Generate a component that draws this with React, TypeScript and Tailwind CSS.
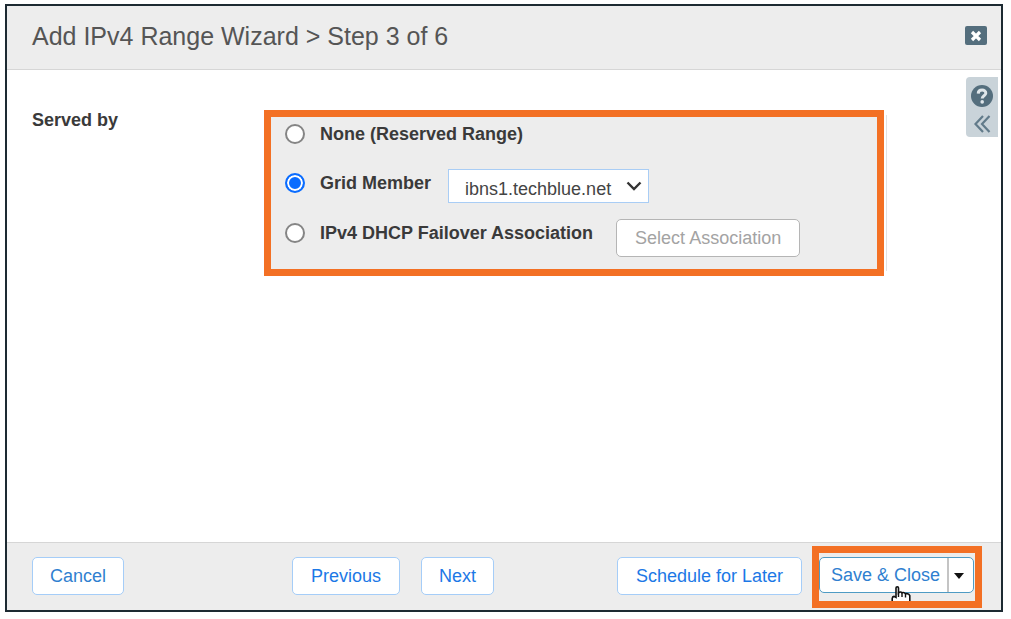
import type { ButtonHTMLAttributes } from "react";

function ActionButton({ className = "", ...props }: ButtonHTMLAttributes<HTMLButtonElement>) {
  return (
    <button
      type="button"
      className={`h-[38px] shrink-0 whitespace-nowrap rounded-[5px] border bg-white text-lg leading-5 ${className}`}
      {...props}
    />
  );
}

const radioClass =
  "size-5 shrink-0 appearance-none rounded-full border-2 border-[#858585] bg-white checked:border-[#0a6cff] checked:bg-[#0a6cff] checked:shadow-[inset_0_0_0_2px_white]";
const optionClass = "flex h-5 items-center gap-[15px] whitespace-nowrap text-lg leading-5 font-bold text-[#3a3a3a]";

export default function App() {
  return (
    <div className="h-screen min-h-[400px] bg-white pt-1 pr-2 pb-[7px] pl-[5px] font-['Liberation_Sans',Arial,sans-serif]">
      <main className="flex h-full flex-col border-2 border-[#1d2a32]">
        <header className="flex h-16 shrink-0 items-center justify-between border-b border-[#d6d6d6] bg-[#ededed] pr-[14px] pb-1 pl-[25px]">
          <h1 className="text-[25px] leading-7 text-[#555]">Add IPv4 Range Wizard &gt; Step 3 of 6</h1>
          <button type="button" aria-label="Close" className="flex h-[19px] w-[22px] items-center justify-center rounded-[2px] bg-[#546e7d]">
            <svg viewBox="0 0 12 12" className="size-3" aria-hidden="true">
              <path d="M2 2 L10 10 M10 2 L2 10" stroke="white" strokeWidth="3.2" />
            </svg>
          </button>
        </header>

        <section className="flex flex-1 items-start pt-[7px] pl-[25px]">
          <h2 className="w-[234px] shrink-0 pt-[31px] text-lg leading-6 font-bold text-[#3a3a3a]">Served by</h2>
          <fieldset aria-label="Served by" className="relative isolate mt-[38px] flex h-[156px] flex-1 flex-col border-r border-[#e2e2e2] bg-white pt-[9px] pl-[19px]">
            <div className="pointer-events-none absolute -top-[5px] right-[2px] -bottom-[5px] -left-[2px] -z-10 border-[7px] border-[#f37024] bg-[#ededed]" />
            <label className={optionClass}>
              <input type="radio" name="served" className={radioClass} />
              None (Reserved Range)
            </label>
            <div className="mt-[25px] flex items-start gap-[17px]">
              <label className={`${optionClass} mt-1`}>
                <input type="radio" name="served" defaultChecked className={radioClass} />
                Grid Member
              </label>
              <div className="relative">
                <select aria-label="Grid member" className="h-[34px] w-[201px] appearance-none border border-[#a9cdf5] bg-white pt-[6px] pl-4 text-lg leading-6 text-[#444]">
                  <option>ibns1.techblue.net</option>
                </select>
                <svg viewBox="0 0 16 10" className="pointer-events-none absolute top-3 right-[7px] h-[10px] w-4" aria-hidden="true">
                  <path d="M1.5 1.5 L8 8 L14.5 1.5" fill="none" stroke="#333" strokeWidth="2.4" />
                </svg>
              </div>
            </div>
            <div className="mt-4 flex items-start gap-[23px]">
              <label className={`${optionClass} mt-1`}>
                <input type="radio" name="served" className={radioClass} />
                IPv4 DHCP Failover Association
              </label>
              <ActionButton disabled className="border-[#b5b5b5] px-[18px] text-[#a3a3a3]">Select Association</ActionButton>
            </div>
          </fieldset>
          <aside className="mr-[3px] ml-[79px] flex h-[60px] w-8 shrink-0 flex-col items-center rounded-l-[4px] bg-[#c9d3d9] pt-2">
            <button type="button" aria-label="Help">
              <svg viewBox="0 0 22 22" className="size-[22px]" aria-hidden="true">
                <circle cx="11" cy="11" r="11" fill="#546e7d" />
                <path d="M7.2 8.6 C7.4 3.8 15 4 14.8 8.3 C14.7 10.8 11.2 10.8 11.2 13.5" fill="none" stroke="#dfe6ea" strokeWidth="3" />
                <circle cx="11.2" cy="16.9" r="1.8" fill="#dfe6ea" />
              </svg>
            </button>
            <button type="button" aria-label="Expand help panel" className="mt-2">
              <svg viewBox="0 0 18 18" className="size-[18px]" aria-hidden="true">
                <path d="M10 1 L2.5 9 L10 17 M16.5 1 L9 9 L16.5 17" fill="none" stroke="#627b8a" strokeWidth="2.2" />
              </svg>
            </button>
          </aside>
        </section>

        <footer className="flex h-[68px] shrink-0 items-center border-t border-[#d6d6d6] bg-[#ededed] pr-[27px] pb-[2px] pl-[25px]">
          <div className="w-[260px] shrink-0">
            <ActionButton className="border-[#a5cdf8] px-[17px] text-[#2f7fd0]">Cancel</ActionButton>
          </div>
          <div className="flex gap-[21px]">
            <ActionButton className="border-[#a5cdf8] px-[18px] text-[#1c78e6]">Previous</ActionButton>
            <ActionButton className="border-[#a5cdf8] px-[17px] text-[#1c78e6]">Next</ActionButton>
          </div>
          <div className="ml-auto flex gap-[17px]">
            <ActionButton className="border-[#a5cdf8] px-[18px] text-[#1c78e6]">Schedule for Later</ActionButton>
            <div className="relative flex h-[38px]">
              <div className="flex h-9 rounded-[5px] border border-[#4e9bc4] bg-white">
                <button type="button" className="w-[127px] pl-[4px] text-lg leading-5 whitespace-nowrap text-[#2f7fd0]">Save &amp; Close</button>
                <button type="button" aria-label="More save options" className="flex w-[26px] items-center justify-center border-l-2 border-[#c4c4c4] pt-[2px] pr-1">
                  <svg viewBox="0 0 10 6" className="h-[6px] w-[10px]" aria-hidden="true">
                    <path d="M0 0 H10 L5 6 Z" fill="#111" />
                  </svg>
                </button>
              </div>
              <svg viewBox="0 0 20 15" className="pointer-events-none absolute top-[29px] left-[72px] h-[15px] w-5" aria-hidden="true">
                <path d="M1.2 20 V12.5 Q1.4 10.6 3 10.4 L5 11.5 V2 Q5 0.8 6.3 0.8 Q7.5 0.8 7.5 2 V7 Q9.5 5 11 6.8 Q13 5.8 14.5 7.8 Q17.8 7 18.8 9.6 V20 Z" fill="white" stroke="#111" strokeWidth="1.6" />
                <path d="M7.5 6 V11 M11 6.8 V11 M14.5 7.8 V11.5" stroke="#111" strokeWidth="1.4" />
              </svg>
              <div className="pointer-events-none absolute -top-[11px] -right-[8px] -bottom-[13px] -left-[7px] border-[7px] border-[#f37024]" />
            </div>
          </div>
        </footer>
      </main>
    </div>
  );
}
